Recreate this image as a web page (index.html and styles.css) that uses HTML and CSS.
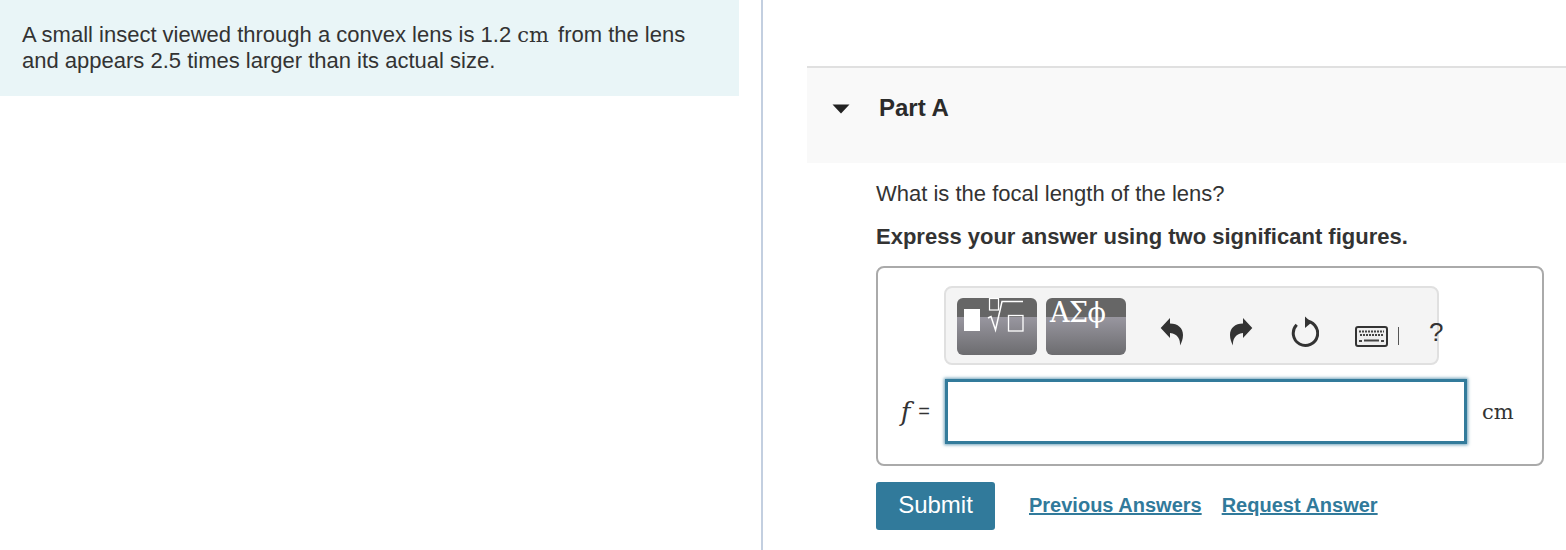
FILE: index.html
```html
<!DOCTYPE html>
<html lang="en">
<head>
<meta charset="utf-8">
<title>Part A</title>
<link rel="stylesheet" href="styles.css">
</head>
<body>
<div class="page">
  <div class="left">
    <div class="intro">A small insect viewed through a convex lens is 1.2 <span class="unit">cm</span> from the lens<br>and appears 2.5 times larger than its actual size.</div>
  </div>
  <div class="divider"></div>
  <div class="right">
    <div class="part-head">
      <svg class="caret" width="18" height="10" viewBox="0 0 18 10"><path d="M0.5 0.5H17.5L9 9.5Z" fill="#222"/></svg>
      <span class="part-title">Part A</span>
    </div>
    <div class="content">
      <p class="question">What is the focal length of the lens?</p>
      <p class="instruction">Express your answer using two significant figures.</p>
      <div class="answer-box">
        <div class="toolbar-row">
          <div class="toolbar">
            <div class="tpl-btn">
              <svg width="80" height="56" viewBox="0 0 80 56">
                <rect x="7" y="11" width="16" height="22" fill="#fff"/>
                <rect x="32.500" y="0.500" width="9" height="11.500" fill="none" stroke="#fff" stroke-width="1.200"/>
                <path d="M31 20L34 18.500L38.500 32L45 3.500H66" fill="none" stroke="#fff" stroke-width="1.500"/>
                <rect x="51.500" y="17.500" width="14.500" height="15.500" fill="none" stroke="#fff" stroke-width="1.300"/>
              </svg>
            </div>
            <div class="tpl-btn"><span class="greek">ΑΣϕ</span></div>
            <div class="tools">
              <svg class="undo" width="24" height="28" viewBox="0 0 24 28"><path d="M0.700 10L10 0V5.500C18 5.500 23 10 23 17C23 21 21.500 25 20 27.500C20.500 22 18 15.500 10 15V20Z" fill="#333"/></svg>
              <svg class="redo" width="24" height="28" viewBox="0 0 24 28"><path d="M23.300 10L14 0V5.500C6 5.500 1 10 1 17C1 21 2.500 25 4 27.500C3.500 22 6 15.500 14 15V20Z" fill="#333"/></svg>
              <svg class="reload" width="29" height="32" viewBox="0 0 29 32"><path d="M15 5.100A12.200 12.200 0 1 1 6.700 8.800" fill="none" stroke="#333" stroke-width="3"/><path d="M15 0.500L21.500 6.500L15 12Z" fill="#333"/></svg>
              <svg class="kbd" width="33" height="21" viewBox="0 0 33 21"><rect x="1" y="1" width="31" height="19" rx="2" fill="#eee" stroke="#333" stroke-width="2"/><path d="M4 5.500H29M5 9H28" stroke="#444" stroke-width="2" stroke-dasharray="2 1"/><path d="M9 14.500H24" stroke="#444" stroke-width="2"/><path d="M4 15H7M26 15H29" stroke="#444" stroke-width="2"/></svg>
              <span class="sep"></span>
              <span class="help">?</span>
            </div>
          </div>
        </div>
        <div class="input-row">
          <span class="var"><i>f</i><span class="eq">=</span></span>
          <div class="input"></div>
          <span class="input-unit">cm</span>
        </div>
      </div>
      <div class="actions">
        <button class="submit">Submit</button>
        <a class="link first" href="#">Previous Answers</a>
        <a class="link" href="#">Request Answer</a>
      </div>
    </div>
  </div>
</div>
</body>
</html>
```
FILE: styles.css
```css
* { box-sizing: border-box; }
html, body { margin: 0; padding: 0; background: #fff; }
body { font-family: "Liberation Sans", Arial, sans-serif; color: #333; overflow: hidden; }
.page { display: flex; height: 550px; width: 1566px; }
.left { width: 761px; flex: none; }
.intro { width: 739px; height: 96px; background: #e9f5f7; padding: 22px 22px 0; font-size: 22px; line-height: 26px; }
.unit { font-family: "DejaVu Serif", serif; font-size: 21px; line-height: 20px; margin-right: 3px; }
.divider { width: 2px; flex: none; background: #c3cfe0; }
.right { flex: 1; padding: 66px 0 0 44px; }
.part-head { height: 97px; background: #f9f9f9; border-top: 2px solid #e0e0e0; display: flex; align-items: flex-start; padding: 27px 0 0 25px; }
.caret { margin-top: 9px; }
.part-title { margin-left: 29px; font-weight: 700; font-size: 24px; line-height: 26px; color: #2b2b2b; }
.content { padding: 18px 0 0 69px; }
.question { margin: 0; font-size: 22px; line-height: 26px; }
.instruction { margin: 17px 0 0; font-size: 22px; line-height: 26px; font-weight: 700; }
.answer-box { margin-top: 16px; width: 668px; height: 200px; border: 2px solid #aaa; border-radius: 8px; padding: 18px 0 0; }
.toolbar-row { padding-left: 66px; }
.toolbar { width: 495px; height: 79px; background: #f4f4f4; border: 2px solid #e0e0e0; border-radius: 8px; display: flex; align-items: flex-start; padding: 10px 0 0 11px; gap: 9px; }
.tpl-btn { width: 80px; height: 57px; flex: none; border-radius: 6px; overflow: hidden; background: linear-gradient(#666 0, #666 33%, #98969f 34%, #6c6c6f 100%); }
.tpl-btn svg { display: block; }
.greek { display: block; padding-left: 4px; font-family: "DejaVu Serif", serif; font-size: 27px; line-height: 30px; color: #fff; white-space: nowrap; letter-spacing: -.5px; }
.tools { display: flex; align-items: center; height: 56px; padding-top: 12px; margin-left: 25px; }
.undo, .redo, .reload, .kbd { flex: none; display: block; }
.redo { margin-left: 45px; }
.reload { margin-left: 37px; }
.kbd { margin-left: 36px; margin-top: 8px; }
.sep { width: 1px; height: 18px; background: #555; margin-left: 10px; margin-top: 8px; flex: none; }
.help { margin-left: 30px; font-size: 26px; color: #333; line-height: 30px; }
.input-row { display: flex; align-items: center; margin-top: 14px; }
.var { width: 67px; flex: none; display: flex; justify-content: flex-end; align-items: center; padding-right: 15px; }
.var i { font-family: "DejaVu Serif", serif; font-size: 26px; margin-right: 8px; }
.eq { font-size: 20px; }
.input { width: 522px; height: 65px; border: 3px solid #337b9b; box-shadow: 0 0 3px 1px rgba(51, 123, 155, .7); background: #fff; flex: none; }
.input-unit { margin-left: 15px; font-family: "DejaVu Serif", serif; font-size: 21px; }
.actions { display: flex; align-items: center; margin-top: 16px; }
.submit { width: 119px; height: 48px; border: 0; border-radius: 3px; background: #317a9b; color: #fff; font-family: inherit; font-size: 24px; padding: 0 0 2px; }
.link { color: #317a9b; font-weight: 700; font-size: 20px; text-decoration: underline; margin-left: 20px; margin-bottom: 2px; }
.link.first { margin-left: 34px; }
```
